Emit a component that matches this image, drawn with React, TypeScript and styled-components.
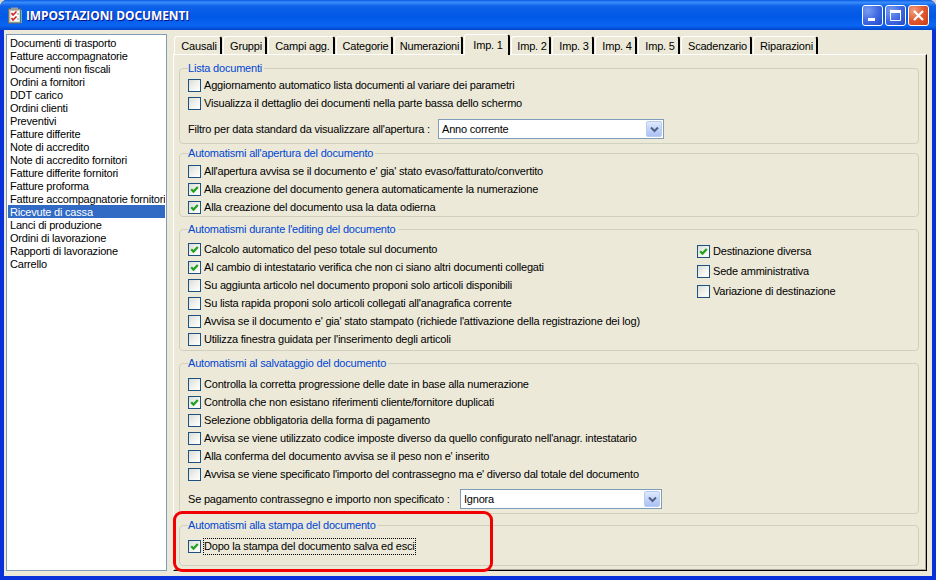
import React from "react";
import styled, { createGlobalStyle } from "styled-components";

const Global = createGlobalStyle`
  html, body { margin: 0; padding: 0; background: #d8d8d0; overflow: hidden; }
  * { box-sizing: border-box; }
  #root { width: 936px; height: 580px; }
`;

const Window = styled.div`
  position: relative;
  width: 936px;
  height: 580px;
  display: flex;
  flex-direction: column;
  background: #0831d9;
  border-radius: 7px 7px 0 0;
  overflow: hidden;
  font-family: "Liberation Sans", Arial, sans-serif;
  font-size: 11px;
  letter-spacing: -0.2px;
  color: #000;
`;

const TitleBar = styled.div`
  height: 30px;
  flex: none;
  display: flex;
  align-items: center;
  padding: 0 7px 0 8px;
  letter-spacing: 0;
  background: linear-gradient(180deg, #0a5ce8 0%, #3a8cf8 8%, #0e62ea 20%, #0058e6 55%, #0a66f2 85%, #0044cc 100%);
`;

const TitleText = styled.span`
  margin-left: 4px;
  flex: 1;
  color: #fff;
  font-family: "Open Sans", "Liberation Sans", sans-serif;
  font-weight: 700;
  font-size: 12px;
  letter-spacing: -0.1px;
  text-shadow: 1px 1px 0 #0f1089;
  white-space: nowrap;
`;

const CaptionButton = styled.div<{ $close?: boolean }>`
  width: 21px;
  height: 21px;
  margin-left: 2px;
  border: 1px solid #fff;
  border-radius: 3px;
  display: flex;
  align-items: center;
  justify-content: center;
  background: ${(p) =>
    p.$close
      ? "radial-gradient(circle at 25% 25%, #f0a080 0%, #e0582f 50%, #c83c14 100%)"
      : "radial-gradient(circle at 25% 25%, #7a9cf0 0%, #3c68e0 55%, #2248c8 100%)"};
`;

const Frame = styled.div`
  flex: 1;
  margin: 0 4px 4px;
  background: #ece9d8;
  display: flex;
  gap: 6px;
  padding: 4px 5px 5px 2px;
  min-height: 0;
`;

const DocList = styled.ul`
  flex: none;
  width: 161px;
  margin: 0;
  padding: 1px;
  list-style: none;
  background: #fff;
  border: 1px solid #7f9db9;
`;

const DocItem = styled.li<{ $selected?: boolean }>`
  height: 13px;
  line-height: 14px;
  padding-left: 2px;
  white-space: nowrap;
  overflow: hidden;
  background: ${(p) => (p.$selected ? "#316ac5" : "transparent")};
  color: ${(p) => (p.$selected ? "#fff" : "#000")};
`;

const TabsColumn = styled.div`
  flex: 1;
  min-width: 0;
  display: flex;
  flex-direction: column;
`;

const TabStrip = styled.div`
  height: 20px;
  flex: none;
  display: flex;
  align-items: flex-end;
  padding-left: 1px;
  position: relative;
  z-index: 1;
`;

const Tab = styled.div<{ $active?: boolean; $w: number }>`
  width: ${(p) => p.$w}px;
  flex: none;
  height: ${(p) => (p.$active ? "21px" : "18px")};
  margin-bottom: ${(p) => (p.$active ? "-1px" : "0")};
  padding: ${(p) => (p.$active ? "3px" : "2px")} 0 0 3px;
  text-align: center;
  line-height: 14px;
  white-space: nowrap;
  background: #ece9d8;
  border-top: 1px solid #fff;
  border-left: 1px solid #fff;
  border-right: 2px solid #000;
  border-radius: 3px 3px 0 0;
  margin-right: 1px;
`;

const Panel = styled.div`
  flex: 1;
  min-height: 0;
  padding: 7px 7px 0 5px;
  border-top: 1px solid #fff;
  border-left: 1px solid #fff;
  border-right: 1px solid #000;
  border-bottom: 1px solid #000;
  box-shadow: inset -1px -1px 0 #aca899;
`;

const Group = styled.fieldset<{ $mt?: number; $pt: number; $pb: number }>`
  margin: ${(p) => p.$mt ?? 0}px 0 0;
  padding: ${(p) => p.$pt}px 0 ${(p) => p.$pb}px 8px;
  border: 1px solid #d0d0bf;
  border-radius: 4px;
  min-width: 0;
`;

const Legend = styled.legend`
  margin-left: 0;
  padding: 0 2px 0 0;
  height: 13px;
  line-height: 13px;
  color: #0046d5;
`;

const Row = styled.label<{ $h?: number }>`
  display: flex;
  align-items: center;
  height: ${(p) => p.$h ?? 18}px;
  white-space: nowrap;
`;

const Box = styled.span`
  flex: none;
  width: 13px;
  height: 13px;
  margin-right: 3px;
  border: 1px solid #1c5180;
  background: linear-gradient(135deg, #dcdcd7 0%, #f4f4f0 60%, #fff 100%);
  display: flex;
  align-items: center;
  justify-content: center;
`;

const FocusText = styled.span`
  outline: 1px dotted #000;
  outline-offset: 0;
  padding: 0 0 1px;
  line-height: 14px;
`;

const Columns = styled.div`
  display: flex;
`;

const MainColumn = styled.div`
  flex: none;
  width: 509px;
`;

const SideColumn = styled.div`
  padding-top: 1px;
`;

const FilterRow = styled.div<{ $mt: number }>`
  display: flex;
  align-items: center;
  margin-top: ${(p) => p.$mt}px;
`;

const FilterLabel = styled.span<{ $w: number }>`
  flex: none;
  width: ${(p) => p.$w}px;
  white-space: nowrap;
`;

const Select = styled.div<{ $w: number }>`
  width: ${(p) => p.$w}px;
  height: 20px;
  flex: none;
  display: flex;
  align-items: center;
  justify-content: space-between;
  padding: 1px 1px 1px 3px;
  background: #fff;
  border: 1px solid #7f9db9;
`;

const SelectArrow = styled.span`
  width: 16px;
  height: 16px;
  display: flex;
  align-items: center;
  justify-content: center;
  border-radius: 2px;
  border: 1px solid #b8ccf0;
  background: linear-gradient(180deg, #e0e8fc 0%, #c4d4f8 50%, #aac2f4 100%);
`;

const Highlight = styled.div`
  position: absolute;
  left: 173px;
  top: 511px;
  width: 320px;
  height: 61px;
  border: 3px solid #f00000;
  border-radius: 9px;
  pointer-events: none;
`;

const Check = () => (
  <svg width="9" height="9" viewBox="0 0 9 9">
    <path d="M1.2 4.2 L3.5 6.6 L7.8 2" fill="none" stroke="#21a121" strokeWidth="2.2" />
  </svg>
);

const CheckRow = ({ on, focus, children }: { on?: boolean; focus?: boolean; children: string }) => (
  <Row $h={18}>
    <Box>{on && <Check />}</Box>
    {focus ? <FocusText>{children}</FocusText> : children}
  </Row>
);

const Arrow = () => (
  <SelectArrow>
    <svg width="9" height="7" viewBox="0 0 9 7">
      <path d="M1 1.5 L4.5 5 L8 1.5" fill="none" stroke="#4d6185" strokeWidth="2" />
    </svg>
  </SelectArrow>
);

const AppIcon = () => (
  <svg width="14" height="17" viewBox="0 0 14 17">
    <rect x="0.5" y="2" width="12" height="14" fill="#b8bcb0" stroke="#6a6e66" />
    <rect x="2.5" y="3.5" width="9" height="11" fill="#fff" />
    <rect x="3" y="0.5" width="7" height="3" fill="#9a9e94" />
    <path d="M3.5 6 L5 8 L8.5 4.5 M3.5 11 L5 13 L8.5 9.5" fill="none" stroke="#d02020" strokeWidth="1.6" />
    <path d="M9 7 h2 M9 12 h2" stroke="#8090a0" />
    <path d="M13.5 3 v13" stroke="#48c0c8" />
  </svg>
);

const docs = [
  "Documenti di trasporto", "Fatture accompagnatorie", "Documenti non fiscali", "Ordini a fornitori",
  "DDT carico", "Ordini clienti", "Preventivi", "Fatture differite", "Note di accredito",
  "Note di accredito fornitori", "Fatture differite fornitori", "Fatture proforma",
  "Fatture accompagnatorie fornitori", "Ricevute di cassa", "Lanci di produzione",
  "Ordini di lavorazione", "Rapporti di lavorazione", "Carrello",
];

const tabs: [string, number][] = [
  ["Causali", 48], ["Gruppi", 44], ["Campi agg.", 67], ["Categorie", 57], ["Numerazioni", 69],
  ["Imp. 1", 46], ["Imp. 2", 40], ["Imp. 3", 42], ["Imp. 4", 42], ["Imp. 5", 42],
  ["Scadenzario", 71], ["Riparazioni", 65],
];

export default function App() {
  return (
    <Window>
      <Global />
      <TitleBar>
        <AppIcon />
        <TitleText>IMPOSTAZIONI DOCUMENTI</TitleText>
        <CaptionButton>
          <svg width="13" height="13" viewBox="0 0 13 13"><rect x="2" y="9" width="7" height="3" fill="#fff" /></svg>
        </CaptionButton>
        <CaptionButton>
          <svg width="13" height="13" viewBox="0 0 13 13"><path d="M1.5 3.5 h10 v8 h-10 Z" fill="none" stroke="#fff" /><rect x="1" y="1" width="11" height="2.5" fill="#fff" /></svg>
        </CaptionButton>
        <CaptionButton $close>
          <svg width="13" height="13" viewBox="0 0 13 13"><path d="M2 2 L11 11 M11 2 L2 11" stroke="#fff" strokeWidth="2.2" /></svg>
        </CaptionButton>
      </TitleBar>
      <Frame>
        <DocList>
          {docs.map((d) => (
            <DocItem key={d} $selected={d === "Ricevute di cassa"}>{d}</DocItem>
          ))}
        </DocList>
        <TabsColumn>
          <TabStrip>
            {tabs.map(([t, w]) => (
              <Tab key={t} $w={w} $active={t === "Imp. 1"}>{t}</Tab>
            ))}
          </TabStrip>
          <Panel>
            <Group $pt={1} $pb={4}>
              <Legend>Lista documenti</Legend>
              <CheckRow>Aggiornamento automatico lista documenti al variare dei parametri</CheckRow>
              <CheckRow>Visualizza il dettaglio dei documenti nella parte bassa dello schermo</CheckRow>
              <FilterRow $mt={7}>
                <FilterLabel $w={250}>Filtro per data standard da visualizzare all'apertura :</FilterLabel>
                <Select $w={226}>Anno corrente<Arrow /></Select>
              </FilterRow>
            </Group>
            <Group $mt={3} $pt={2} $pb={0}>
              <Legend>Automatismi all'apertura del documento</Legend>
              <CheckRow>All'apertura avvisa se il documento e' gia' stato evaso/fatturato/convertito</CheckRow>
              <CheckRow on>Alla creazione del documento genera automaticamente la numerazione</CheckRow>
              <CheckRow on>Alla creazione del documento usa la data odierna</CheckRow>
            </Group>
            <Group $mt={6} $pt={4} $pb={2}>
              <Legend>Automatismi durante l'editing del documento</Legend>
              <Columns>
                <MainColumn>
                  <CheckRow on>Calcolo automatico del peso totale sul documento</CheckRow>
                  <CheckRow on>Al cambio di intestatario verifica che non ci siano altri documenti collegati</CheckRow>
                  <CheckRow>Su aggiunta articolo nel documento proponi solo articoli disponibili</CheckRow>
                  <CheckRow>Su lista rapida proponi solo articoli collegati all'anagrafica corrente</CheckRow>
                  <CheckRow>Avvisa se il documento e' gia' stato stampato (richiede l'attivazione della registrazione dei log)</CheckRow>
                  <CheckRow>Utilizza finestra guidata per l'inserimento degli articoli</CheckRow>
                </MainColumn>
                <SideColumn>
                  <Row $h={20}><Box><Check /></Box>Destinazione diversa</Row>
                  <Row $h={20}><Box />Sede amministrativa</Row>
                  <Row $h={20}><Box />Variazione di destinazione</Row>
                </SideColumn>
              </Columns>
            </Group>
            <Group $mt={6} $pt={5} $pb={4}>
              <Legend>Automatismi al salvataggio del documento</Legend>
              <CheckRow>Controlla la corretta progressione delle date in base alla numerazione</CheckRow>
              <CheckRow on>Controlla che non esistano riferimenti cliente/fornitore duplicati</CheckRow>
              <CheckRow>Selezione obbligatoria della forma di pagamento</CheckRow>
              <CheckRow>Avvisa se viene utilizzato codice imposte diverso da quello configurato nell'anagr. intestatario</CheckRow>
              <CheckRow>Alla conferma del documento avvisa se il peso non e' inserito</CheckRow>
              <CheckRow>Avvisa se viene specificato l'importo del contrassegno ma e' diverso dal totale del documento</CheckRow>
              <FilterRow $mt={6}>
                <FilterLabel $w={272}>Se pagamento contrassegno e importo non specificato :</FilterLabel>
                <Select $w={202}>Ignora<Arrow /></Select>
              </FilterRow>
            </Group>
            <Group $mt={5} $pt={5} $pb={10}>
              <Legend>Automatismi alla stampa del documento</Legend>
              <CheckRow on focus>Dopo la stampa del documento salva ed esci</CheckRow>
            </Group>
          </Panel>
        </TabsColumn>
      </Frame>
      <Highlight />
    </Window>
  );
}
